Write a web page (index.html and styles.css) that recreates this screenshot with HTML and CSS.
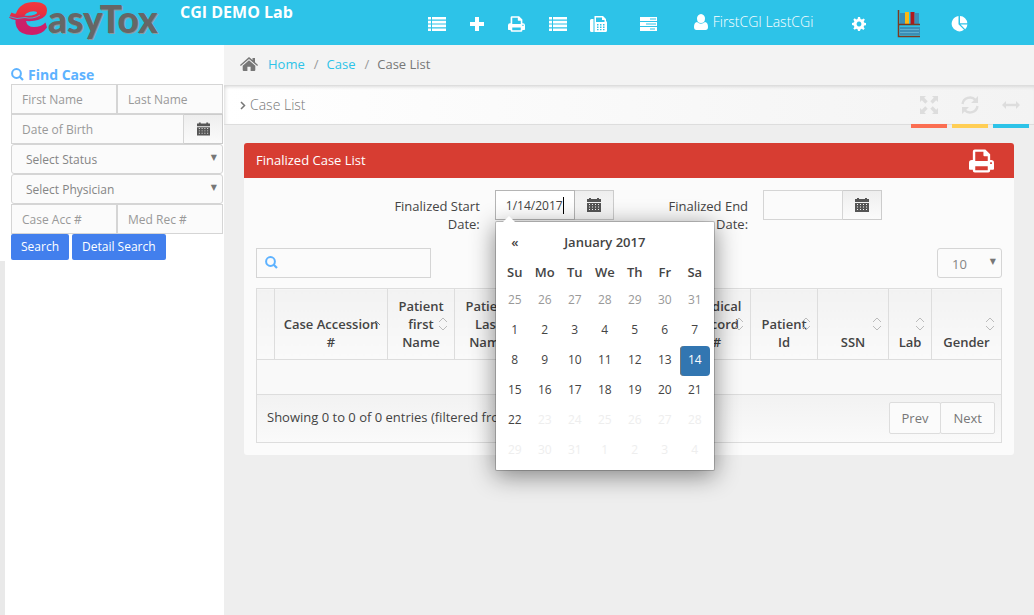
FILE: index.html
```html
<!DOCTYPE html>
<html lang="en">
<head>
<meta charset="utf-8">
<meta name="viewport" content="width=device-width, initial-scale=1">
<title>EasyTox - Case List</title>
<link rel="stylesheet" href="styles.css">
</head>
<body>
<svg class="defs" aria-hidden="true">
  <symbol id="i-list" viewBox="0 0 18 14"><path d="M0 0h3v2.6H0zM4 0h14v2.6H4zM0 3.8h3v2.6H0zM4 3.8h14v2.6H4zM0 7.6h3v2.6H0zM4 7.6h14v2.6H4zM0 11.4h3V14H0zM4 11.4h14V14H4z"/></symbol>
  <symbol id="i-print" viewBox="0 0 26 24"><path fill-rule="evenodd" d="M4 11V2q0-2 2-2h11l5 5v6h1q3 0 3 3v6q0 1-1 1h-3v1q0 2-2 2H6q-2 0-2-2v-1H1q-1 0-1-1v-6q0-3 3-3zM6.500 2.500V12h13V7H16q-1 0-1-1V2.500zM6.500 17.500v4h13v-4zM22 13.200v1.800h1.800v-1.800z"/></symbol>
  <symbol id="i-cal" viewBox="0 0 14 14"><path fill-rule="evenodd" d="M0 1h2V0h2v1h6V0h2v1h2v3H0zM0 5h14v9H0zM2 6v1h1V6zm3 0v1h1V6zm3 0v1h1V6zm3 0v1h1V6zM2 8.500v1h1v-1zm3 0v1h1v-1zm3 0v1h1v-1zm3 0v1h1v-1zM2 11v1h1v-1zm3 0v1h1v-1zm3 0v1h1v-1zm3 0v1h1v-1z"/></symbol>
  <symbol id="i-search" viewBox="0 0 13 13"><circle cx="5.500" cy="5.500" r="4.400" fill="none" stroke="currentColor" stroke-width="2"/><path d="M8.500 8.500l3.500 3.500" stroke="currentColor" stroke-width="2.200"/></symbol>
  <symbol id="i-sort" viewBox="0 0 10 14"><path d="M1 5l4-4 4 4M1 9l4 4 4-4" fill="none" stroke="#bbb" stroke-width="1"/></symbol>
</svg>

<header class="topbar">
  <a class="logo" href="#" aria-label="EasyTox">
    <svg class="logo-e" viewBox="0 0 39 35" aria-hidden="true">
      <defs><linearGradient id="eg" x1="0" y1="0" x2="0" y2="1"><stop offset="0" stop-color="#f2383c"/><stop offset=".35" stop-color="#e8303f"/><stop offset=".55" stop-color="#c9226b"/><stop offset="1" stop-color="#d01c68"/></linearGradient></defs>
      <path fill="url(#eg)" fill-rule="evenodd" d="M0 15.500L2.500 10.500Q4.500 12 7 11.500Q11 0 25 0Q38 0 38 8.500Q38 15.500 29 18Q24 19.500 17 19Q18 25 25 25Q32 25 36.500 20.500L38 25.500Q33 33 23 33Q11 33 7.500 25Q6 21 6.500 18Q2.500 17.500 0 15.500ZM15.500 13.500Q21 14.500 26 12.500Q28.500 11.500 28 10Q25 8.500 21 9.800Q17 11 15.500 13.500Z"/>
      <path d="M0 14.500Q8 18 16 15.500Q24 17.500 31 13" fill="none" stroke="#2dc3e8" stroke-width=".8"/>
    </svg><span class="logo-text">asyTox</span>
  </a>
  <strong class="lab">CGI DEMO Lab</strong>
  <nav class="nav">
    <a href="#" aria-label="Cases"><svg width="18" height="14"><use href="#i-list"/></svg></a>
    <a class="narrow" href="#" aria-label="Add"><svg width="14" height="14" viewBox="0 0 14 14"><path d="M5 0h4v5h5v4H9v5H5V9H0V5h5z"/></svg></a>
    <a href="#" aria-label="Print"><svg width="17" height="16"><use href="#i-print"/></svg></a>
    <a href="#" aria-label="List"><svg width="18" height="14"><use href="#i-list"/></svg></a>
    <a href="#" aria-label="Fax"><svg width="17" height="16" viewBox="0 0 17 16"><path fill-rule="evenodd" d="M0 4.500Q0 3 1.500 3H3.500V16H1.500Q0 16 0 14.500zM4.500 0H13l3 3v2q1 .5 1 1.500V14.500q0 1.500-1.500 1.500H4.500zM6 1.500V6h8.500V4H12V1.500zM7 8v1.500h1.500V8zm3 0v1.500h1.500V8zm3 0v1.500h1.500V8zM7 10.500V12h1.500v-1.500zm3 0V12h1.500v-1.500zm3 0V12h1.500v-1.500zM7 13v1.300h1.500V13zm3 0v1.300h1.500V13zm3 0v1.300h1.500V13z"/></svg></a>
    <a class="wide" href="#" aria-label="Worklists"><svg width="17" height="14" viewBox="0 0 17 14"><path fill-rule="evenodd" d="M0 0h17v4H0zM0 5h17v4H0zM0 10h17v4H0zM10 1.500v1h6v-1zM6 6.500v1h10v-1zM10 11.500v1h5v-1z"/></svg></a>
    <a class="user" href="#"><svg width="14" height="16" viewBox="0 0 14 16"><path d="M7 0a4.200 4.200 0 0 1 4 4.500Q11 9 7 9T3 4.500A4.200 4.200 0 0 1 7 0zM3 8q4 3.500 8 0 3 .5 3 5 0 3-2.500 3h-9Q0 16 0 13 0 8.500 3 8z"/></svg><span>FirstCGI LastCGi</span></a>
    <a class="mid" href="#" aria-label="Settings"><svg width="14" height="14" viewBox="0 0 14 14"><path fill-rule="evenodd" d="M6 0h2l.5 2 1.500.6L11.700 1.500 12.900 2.800 11.700 4.300l.6 1.400L14 6v2.200l-1.800.4-.6 1.400 1.100 1.500-1.400 1.400-1.500-1.100-1.400.6L8 14H6l-.4-1.700-1.400-.6-1.500 1.100-1.400-1.400 1.100-1.500-.6-1.400L0 8V6l1.800-.4.6-1.400L1.300 2.700 2.700 1.300l1.500 1.100L5.600 2zM7 4.600a2.400 2.400 0 1 0 .01 0z"/></svg></a>
    <a class="mid" href="#" aria-label="Library"><svg width="24" height="28" viewBox="0 0 24 28"><path fill="#3b8fb8" d="M3 3h5v11H3zM18 3h4v11h-4zM3 17h20v8H3z"/><path fill="#5fb0d0" d="M3 19h19v1H3zM3 22h19v1H3z"/><path fill="#fdb913" d="M8 2h4v12H8z"/><path fill="#b0181c" d="M13.500 2h4v12h-4z"/><path fill="none" stroke="#7b3a20" stroke-width="1.500" d="M1.500 0v26.500H23M2 14.500h21"/></svg></a>
    <a class="mid" href="#" aria-label="Reports"><svg width="17" height="16" viewBox="0 0 17 16"><path d="M7.500 0v8.300l5.500 5.500A7.700 7.700 0 1 1 7.500 0zM9 0a7.500 7.500 0 0 1 7.300 7.200H9zM9.500 8.500h6.900a7 7 0 0 1-2.200 4.700z"/></svg></a>
  </nav>
</header>

<div class="layout">
  <aside class="sidebar">
    <form class="find">
      <h2><svg width="13" height="13"><use href="#i-search"/></svg>Find Case</h2>
      <div class="pair"><input type="text" placeholder="First Name" aria-label="First Name"><input type="text" placeholder="Last Name" aria-label="Last Name"></div>
      <div class="group"><input type="text" placeholder="Date of Birth" aria-label="Date of Birth"><button type="button" class="addon" aria-label="Pick date of birth"><svg width="13" height="14"><use href="#i-cal"/></svg></button></div>
      <div class="select"><select aria-label="Status"><option>Select Status</option></select></div>
      <div class="select"><select aria-label="Physician"><option>Select Physician</option></select></div>
      <div class="pair"><input type="text" placeholder="Case Acc #" aria-label="Case accession number"><input type="text" placeholder="Med Rec #" aria-label="Medical record number"></div>
      <div class="actions"><button type="submit">Search</button><button type="button">Detail Search</button></div>
    </form>
    <div class="sidebar-rest"></div>
  </aside>

  <main class="content">
    <nav class="crumbs" aria-label="Breadcrumb">
      <svg width="18" height="14" viewBox="0 0 18 14"><path d="M9 0l3.500 3V1H15v4.200L18 8l-.8 1L9 2 .8 9 0 8zM9 3.300L15.300 8.700V13q0 1-1 1H10.600V9.800H7.400V14H3.700q-1 0-1-1V8.700z"/></svg>
      <ol><li><a href="#">Home</a></li><li><a href="#">Case</a></li><li>Case List</li></ol>
    </nav>
    <div class="titlebar">
      <h1><svg width="6" height="9" viewBox="0 0 6 9"><path d="M1 1l3.500 3.500L1 8" fill="none" stroke="#777" stroke-width="1.500"/></svg>Case List</h1>
      <div class="tools">
        <button type="button" class="t-red" aria-label="Full screen"><svg width="18" height="18" viewBox="0 0 18 18"><path d="M0 0h6L4.200 1.800 7.700 5.300 5.300 7.700 1.800 4.200 0 6zM18 0v6l-1.800-1.800-3.500 3.500-2.400-2.400 3.500-3.500L12 0zM0 18v-6l1.800 1.800 3.500-3.500 2.400 2.400-3.500 3.500L6 18zM18 18h-6l1.800-1.800-3.500-3.500 2.400-2.400 3.500 3.500L18 12z"/></svg></button>
        <button type="button" class="t-yellow" aria-label="Refresh"><svg width="18" height="18" viewBox="0 0 18 18"><path d="M1.500 8A7.500 7.500 0 0 1 14.500 4M16.500 10A7.500 7.500 0 0 1 3.500 14" fill="none" stroke="#ddd" stroke-width="2.400"/><path d="M17 0v7h-7zM1 18v-7h7z"/></svg></button>
        <button type="button" class="t-blue" aria-label="Toggle width"><svg width="18" height="8" viewBox="0 0 18 8"><path d="M0 4l4-4v2.800h10V0l4 4-4 4V5.200H4V8z"/></svg></button>
      </div>
    </div>

    <section class="panel">
      <header><h2>Finalized Case List</h2><button type="button" aria-label="Print list"><svg width="25" height="24"><use href="#i-print"/></svg></button></header>
      <div class="panel-body">
        <div class="dates">
          <label class="l-start" for="start">Finalized Start Date:</label>
          <div class="group date">
            <input id="start" class="active" type="text" value="1/14/2017"><button type="button" class="addon" aria-label="Pick start date"><svg width="14" height="14"><use href="#i-cal"/></svg></button>
            <div class="picker">
              <table>
                <thead>
                  <tr><th><button type="button" aria-label="Previous month">«</button></th><th colspan="5">January 2017</th><th></th></tr>
                  <tr><th>Su</th><th>Mo</th><th>Tu</th><th>We</th><th>Th</th><th>Fr</th><th>Sa</th></tr>
                </thead>
                <tbody>
                  <tr class="old"><td>25</td><td>26</td><td>27</td><td>28</td><td>29</td><td>30</td><td>31</td></tr>
                  <tr><td>1</td><td>2</td><td>3</td><td>4</td><td>5</td><td>6</td><td>7</td></tr>
                  <tr><td>8</td><td>9</td><td>10</td><td>11</td><td>12</td><td>13</td><td class="on">14</td></tr>
                  <tr><td>15</td><td>16</td><td>17</td><td>18</td><td>19</td><td>20</td><td>21</td></tr>
                  <tr><td>22</td><td class="off">23</td><td class="off">24</td><td class="off">25</td><td class="off">26</td><td class="off">27</td><td class="off">28</td></tr>
                  <tr><td class="off">29</td><td class="off">30</td><td class="off">31</td><td class="off">1</td><td class="off">2</td><td class="off">3</td><td class="off">4</td></tr>
                </tbody>
              </table>
            </div>
          </div>
          <label class="l-end" for="end">Finalized End Date:</label>
          <div class="group date"><input id="end" type="text"><button type="button" class="addon" aria-label="Pick end date"><svg width="14" height="14"><use href="#i-cal"/></svg></button></div>
        </div>
        <div class="filters">
          <div class="search"><svg width="13" height="13"><use href="#i-search"/></svg><input type="search" aria-label="Search cases"></div>
          <div class="select size"><select aria-label="Rows per page"><option>10</option></select></div>
        </div>
        <table class="cases">
          <colgroup><col class="c18"><col class="c113"><col class="c67"><col class="c67"><col><col class="c67"><col class="c67"><col class="c71"><col class="c43"><col class="c70"></colgroup>
          <thead><tr>
            <th></th>
            <th>Case Accession #<svg class="sort" width="10" height="14" viewBox="0 0 10 14"><path d="M1 8l4-4 4 4" fill="none" stroke="#777"/></svg></th>
            <th>Patient first Name<svg class="sort" width="10" height="14"><use href="#i-sort"/></svg></th>
            <th>Patient Last Name</th>
            <th></th>
            <th>Medical Record #<svg class="sort" width="10" height="14"><use href="#i-sort"/></svg></th>
            <th>Patient Id<svg class="sort" width="10" height="14"><use href="#i-sort"/></svg></th>
            <th>SSN<svg class="sort" width="10" height="14"><use href="#i-sort"/></svg></th>
            <th>Lab<svg class="sort" width="10" height="14"><use href="#i-sort"/></svg></th>
            <th>Gender<svg class="sort" width="10" height="14"><use href="#i-sort"/></svg></th>
          </tr></thead>
          <tbody><tr><td colspan="10"></td></tr></tbody>
        </table>
        <div class="table-foot"><span>Showing 0 to 0 of 0 entries (filtered from 0 total entries)</span><div class="pager"><button type="button">Prev</button><button type="button">Next</button></div></div>
      </div>
    </section>
  </main>
</div>
</body>
</html>
```
FILE: styles.css
```css
* { box-sizing: border-box; }
body {
  margin: 0;
  min-height: 100vh;
  display: flex;
  flex-direction: column;
  background: #eee;
  color: #444;
  font: 13px/18px "Open Sans", "Noto Sans", sans-serif;
}
h1, h2 { margin: 0; }
a { color: #2dc3e8; text-decoration: none; }
svg { fill: currentColor; flex: none; }
.defs { position: absolute; width: 0; height: 0; }
input, select, button { font: inherit; margin: 0; border-radius: 0; }
button { cursor: pointer; }
input, select {
  min-width: 0;
  width: 100%;
  height: 30px;
  padding: 0 10px;
  border: 1px solid #d5d5d5;
  background: #fbfbfb;
  color: #444;
  outline: none;
  font-size: 12px;
}
input::placeholder { color: #999; opacity: 1; }

.topbar {
  display: flex;
  align-items: flex-start;
  height: 45px;
  padding-right: 50px;
  background: #2dc3e8;
  color: #fff;
}
.logo { display: flex; align-items: center; width: 180px; height: 38px; padding-left: 9px; color: #666; }
.logo-e { width: 39px; height: 35px; }
.logo-text { font: 900 37px/44px Lato, sans-serif; text-shadow: 1px 1px 0 #8a9a9e; }
.lab { font-size: 16px; line-height: 24px; }
.nav { display: flex; align-items: center; margin-left: auto; height: 45px; padding-top: 3px; }
.nav a { display: flex; align-items: center; justify-content: center; width: 41px; color: #fff; }
.nav .narrow { width: 39px; }
.nav .wide { width: 58px; }
.nav .mid { width: 50px; }
.nav .user { width: 157px; gap: 5px; padding: 0 4px 5px 0; font-size: 14px; font-weight: 300; }

.layout { display: flex; flex: 1; }
.sidebar { display: flex; flex-direction: column; flex: none; width: 224px; background: #fff; }
.sidebar-rest { flex: 1; border-left: 5px solid #e9e9e9; }
.find { padding: 20px 1px 1px 11px; }
.find h2 { display: flex; align-items: center; gap: 4px; color: #5db2ff; font-size: 14px; font-weight: 700; line-height: 19px; }
.pair, .group { display: flex; }
.addon {
  display: flex;
  flex: none;
  align-items: center;
  justify-content: center;
  width: 39px;
  height: 30px;
  padding: 0;
  border: 1px solid #ccc;
  border-left: 0;
  background: linear-gradient(#eee, #fbfbfb);
  color: #555;
}
.select { position: relative; }
.select select { appearance: none; padding: 1px 14px 0; border-radius: 3px; color: #858585; display: block; }
.select::after { content: "▼"; position: absolute; right: 6px; top: 5px; font: 8px/18px "DejaVu Sans", sans-serif; color: #777; pointer-events: none; }
.actions { display: flex; gap: 3px; }
.actions button { height: 26px; padding: 0 10px; border: 0; border-radius: 2px; background: #427fed; color: #fff; font-size: 12px; }

.content { flex: 1; min-width: 0; }
.crumbs { display: flex; align-items: center; gap: 10px; height: 40px; padding: 0 16px 2px; background: #f3f3f3; color: #777; }
.crumbs ol { display: flex; margin: 0; padding: 0; list-style: none; }
.crumbs li + li::before { content: "/"; padding: 0 8px 0 9px; color: #999; }
.titlebar {
  display: flex;
  justify-content: space-between;
  height: 40px;
  padding: 0 5px 0 16px;
  border-top: 1px solid #ddd;
  border-bottom: 1px solid #ddd;
  background: linear-gradient(90deg, #fff, #f3f3f3);
  box-shadow: inset 0 3px 4px -3px #ccc, inset 4px 0 5px -4px #ccc;
}
.titlebar h1 { display: flex; align-items: center; gap: 4px; color: #777; font-size: 14px; font-weight: 300; }
.tools { display: flex; gap: 5px; height: 42px; }
.tools button { display: flex; align-items: center; justify-content: center; width: 36px; padding: 0; border: 0; border-bottom: 4px solid; background: none; }
.tools svg { color: #ddd; }
.t-red { border-color: #fb6e52 !important; }
.t-yellow { border-color: #ffce55 !important; }
.t-blue { border-color: #2dc3e8 !important; }

.panel { margin: 18px 20px; border-radius: 3px; background: #fbfbfb; }
.panel > header { display: flex; align-items: center; justify-content: space-between; height: 35px; padding: 0 20px 0 12px; border-radius: 3px 3px 0 0; background: #d73d32; color: #fff; }
.panel h2 { padding-bottom: 2px; font-size: 13px; font-weight: 400; }
.panel header button { display: flex; padding: 0; border: 0; background: none; color: #fff; }
.panel-body { padding: 12px; }
.dates { display: flex; align-items: flex-start; }
.dates label { flex: none; padding-top: 7px; text-align: right; }
.l-start { width: 30%; padding-left: 17%; }
.l-end { width: 18%; padding-left: 5%; }
.date { position: relative; width: 119px; margin-left: 15px; }
.active { border-color: #b5b5b5; background: linear-gradient(#000, #000) 67px 6px / 1px 17px no-repeat #fff; }

.picker {
  position: absolute;
  z-index: 10;
  left: 0;
  top: 31px;
  padding: 4px;
  border: 1px solid rgba(0, 0, 0, .2);
  border-radius: 2px;
  background: #fff;
  background-clip: padding-box;
  box-shadow: 0 5px 25px rgba(0, 0, 0, .45);
}
.picker::before { content: ""; position: absolute; left: 7px; top: -6px; border: 6px solid transparent; border-top: 0; border-bottom-color: #fff; }
.picker table { border-collapse: collapse; }
.picker th, .picker td { min-width: 30px; height: 30px; padding: 0; text-align: center; }
.picker th { padding-top: 2px; font-weight: 600; }
.picker td { padding-bottom: 2px; font-size: 12px; }
.picker th button { padding: 0; border: 0; background: none; color: #444; }
.picker .old { color: #999; }
.picker .off { color: #eee; }
.picker .on { border-radius: 4px; background: #3276b1; color: #fff; box-shadow: inset 1px 0 0 #777; }

.filters { display: flex; justify-content: space-between; margin: 15px 0 10px; }
.search { position: relative; width: 175px; }
.search svg { position: absolute; left: 9px; top: 8px; color: #5db2ff; }
.search input { display: block; padding-left: 30px; }
.size { width: 65px; }
.size select { font-size: 13px; }

.cases { width: 100%; table-layout: fixed; border-collapse: collapse; }
.cases th, .cases td { border: 1px solid #ddd; }
.cases th { position: relative; padding: 8px; background: linear-gradient(#f2f2f2, #fafafa); font-weight: 600; vertical-align: bottom; }
.cases td { height: 35px; background: #f9f9f9; }
.sort { position: absolute; right: 6px; top: 50%; margin-top: -7px; }
.c18 { width: 18px; }
.c43 { width: 43px; }
.c67 { width: 67px; }
.c70 { width: 70px; }
.c71 { width: 71px; }
.c113 { width: 113px; }
.table-foot { display: flex; align-items: flex-start; justify-content: space-between; height: 48px; padding: 7px 6px 0 10px; border: 1px solid #ddd; border-top: 0; background: linear-gradient(#f2f2f2, #fafafa); }
.table-foot span { padding-top: 6px; }
.pager { display: flex; }
.pager button { height: 32px; padding: 0 12px; border: 1px solid #ddd; border-radius: 2px; background: #fbfbfb; color: #777; }
.pager button + button { margin-left: -1px; }
```
